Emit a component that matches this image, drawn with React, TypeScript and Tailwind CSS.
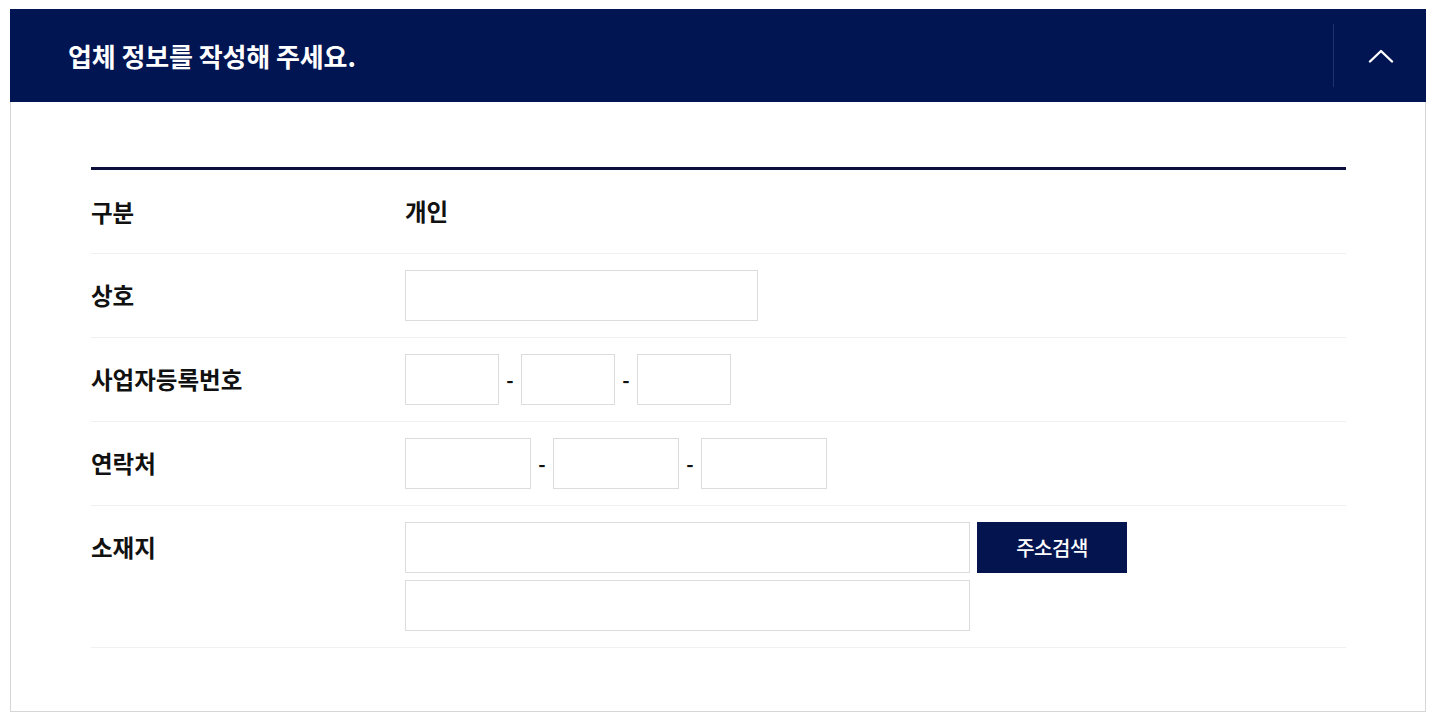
const font = { fontFamily: '"Noto Sans CJK KR", "Noto Sans", sans-serif' }

function Field({ w }: { w: string }) {
  return <input type="text" className={`${w} h-[51px] border border-[#dcdcdc] bg-white outline-none`} />
}

function Dash() {
  return <span className="w-[22px] text-center text-[20px] font-bold text-[#111]">-</span>
}

function Row({ label, children }: { label: string; children: React.ReactNode }) {
  return (
    <div className="flex py-4 border-b border-[#f0f0f0]">
      <div className="w-[314px] h-[51px] flex items-center text-[23.5px] font-bold text-[#111]">{label}</div>
      <div className="flex-1">{children}</div>
    </div>
  )
}

export default function App() {
  return (
    <div className="bg-white min-h-screen pt-[9px] pl-[10px]" style={font}>
      <div className="w-[1416px]">
        {/* Header */}
        <div className="h-[93px] bg-[#011553] flex items-center">
          <h2 className="flex-1 pl-[58px] text-[26px] font-bold text-white tracking-[-0.1px]">
            업체 정보를 작성해 주세요.
          </h2>
          <div className="h-[63px] w-px bg-[#1e3270]" />
          <button className="w-[92px] h-full flex items-center justify-center pl-[2px]">
            <svg width="26" height="14" viewBox="0 0 26 14" fill="none">
              <path d="M2 12.5L13 2l11 10.5" stroke="white" strokeWidth="2.4" strokeLinecap="round" strokeLinejoin="round" />
            </svg>
          </button>
        </div>

        {/* Body */}
        <div className="border-x border-b border-[#d6d6d6] pl-[80px] pr-[79px] pt-[65px] pb-[63px]">
          <div className="border-t-[3px] border-[#0c0e3c]">
            <div className="flex h-[84px] items-center border-b border-[#f0f0f0]">
              <div className="w-[314px] text-[23.5px] font-bold text-[#111] pt-[3px]">구분</div>
              <div className="text-[23.5px] font-bold text-[#111]">개인</div>
            </div>
            <Row label="상호">
              <Field w="w-[353px]" />
            </Row>
            <Row label="사업자등록번호">
              <div className="flex items-center">
                <Field w="w-[94px]" />
                <Dash />
                <Field w="w-[94px]" />
                <Dash />
                <Field w="w-[94px]" />
              </div>
            </Row>
            <Row label="연락처">
              <div className="flex items-center">
                <Field w="w-[126px]" />
                <Dash />
                <Field w="w-[126px]" />
                <Dash />
                <Field w="w-[126px]" />
              </div>
            </Row>
            <Row label="소재지">
              <div className="flex flex-col gap-[7px]">
                <div className="flex gap-[7px]">
                  <Field w="w-[565px]" />
                  <button className="w-[150px] h-[51px] bg-[#03144f] text-white text-[20px] font-medium tracking-[-0.5px]">주소검색</button>
                </div>
                <Field w="w-[565px]" />
              </div>
            </Row>
          </div>
        </div>
      </div>
    </div>
  )
}
